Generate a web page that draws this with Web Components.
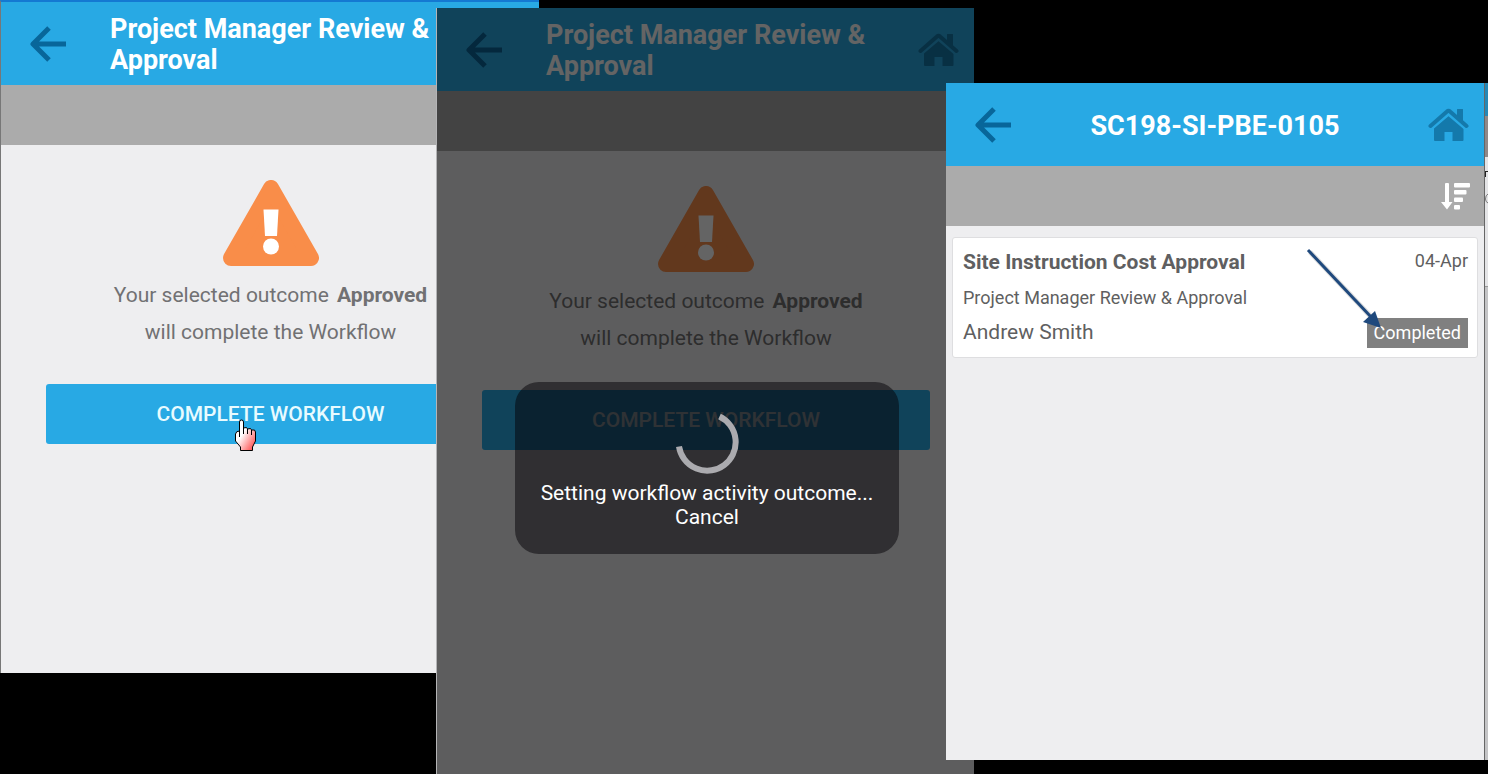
<!DOCTYPE html>
<html lang="en">
<head>
<meta charset="utf-8">
<title>Workflow approval</title>
<style>
    body {
        margin: 0;
        background: #000;
        font-family: Roboto, "Liberation Sans", sans-serif;
    }
</style>
</head>
<body>
<screen-desk>
    <app-screen class="first">
        <app-bar slot="bar">Project Manager Review &amp; Approval</app-bar>
        <tool-strip slot="tools"></tool-strip>
        <outcome-panel data-outcome="Approved"></outcome-panel>
        <hand-cursor slot="over"></hand-cursor>
    </app-screen>

    <app-screen class="second">
        <app-bar slot="bar">Project Manager Review &amp; Approval</app-bar>
        <tool-strip slot="tools"></tool-strip>
        <outcome-panel data-outcome="Approved"></outcome-panel>
        <progress-dialog slot="over">Setting workflow activity outcome...</progress-dialog>
    </app-screen>

    <app-screen class="third">
        <app-bar slot="bar" class="centered">SC198-SI-PBE-0105</app-bar>
        <tool-strip slot="tools" data-sort></tool-strip>
        <task-card>
            <span slot="title">Site Instruction Cost Approval</span>
            <span slot="date">04-Apr</span>
            <span slot="step">Project Manager Review &amp; Approval</span>
            <span slot="person">Andrew Smith</span>
            <span slot="status">Completed</span>
        </task-card>
    </app-screen>

    <screen-edge class="edge"></screen-edge>
</screen-desk>

<script>
function attach(element, html) {
    const template = document.createElement('template');
    template.innerHTML = html;
    const shadowRoot = element.attachShadow({ mode: 'open' });
    shadowRoot.appendChild(template.content.cloneNode(true));
    return shadowRoot;
}

// Overlapping screens share the columns of one grid
class ScreenDesk extends HTMLElement {
    constructor() {
        super();
        attach(this, `<style>
                        :host {
                            display: grid;
                            grid-template-columns: 437fr 102fr 407fr 28fr 510fr 4fr;
                            grid-template-rows: 1fr;
                            min-height: 100vh;
                            overflow: hidden;
                        }
                        ::slotted(*) { grid-row: 1; min-width: 0; }
                        ::slotted(.first) {
                            grid-column: 1 / 3;
                            margin-bottom: 101px;
                            border-top: 2px solid #1479d2;
                            border-left: 1px solid #777;
                        }
                        ::slotted(.second) {
                            grid-column: 2 / 5;
                            margin-top: 8px;
                            box-shadow: -1px 0 #b4b4b6;
                        }
                        ::slotted(.third) { grid-column: 4 / 6; margin: 83px 0 14px; }
                        ::slotted(.edge) { grid-column: 6; margin: 83px 0 14px; }
                      </style>
                      <slot></slot>`);
    }
}

class AppScreen extends HTMLElement {
    constructor() {
        super();
        attach(this, `<style>
                        :host {
                            display: flex;
                            flex-direction: column;
                            position: relative;
                            background: #eeeef0;
                        }
                      </style>
                      <slot name="bar"></slot>
                      <slot name="tools"></slot>
                      <slot></slot>
                      <slot name="over"></slot>`);
    }
}

class AppBar extends HTMLElement {
    constructor() {
        super();
        attach(this, `<style>
                        :host {
                            display: grid;
                            grid-template-columns: 109px 1fr 100px;
                            align-items: center;
                            height: 83px;
                            background: #28a9e4;
                            color: #fff;
                        }
                        :host(.centered) { grid-template-columns: 100px 1fr 100px; }
                        :host(.centered) h1 { text-align: center; }
                        h1 { margin: 0; padding-top: 3px; font-size: 27px; line-height: 31px; font-weight: 700; }
                        button { display: flex; padding: 0; border: 0; background: none; }
                        .back { margin-left: 29px; justify-self: start; }
                        .home { margin-right: 15px; justify-self: end; }
                      </style>
                      <button class="back" aria-label="Back">
                        <svg width="38" height="38" viewBox="0 0 38 38" fill="none" stroke="#08669a" stroke-width="5">
                            <path d="M36 19H5M19 3L3 19L19 35" stroke-linejoin="round"/>
                        </svg>
                      </button>
                      <h1><slot></slot></h1>
                      <button class="home" aria-label="Home">
                        <svg width="41" height="34" viewBox="0 0 41 34" fill="#1479ab">
                            <path d="M20.5 7.5L35.500 19.500V32Q35.500 33 34.500 33H24.500V24H16.500V33H7Q6 33 6 32V19.500Z"/>
                            <path d="M29 2Q29 1 30 1H34Q35 1 35 2V15L29 10Z"/>
                            <path d="M2 20L19 5.500Q20.500 4 22 5.500L39 20" fill="none" stroke="#28a9e4" stroke-width="6"/>
                            <path d="M29 2Q29 1 30 1H34Q35 1 35 2V15L29 10Z"/>
                            <path d="M2.500 18L19 3.500Q20.500 2 22 3.500L38.500 18" fill="none" stroke="#1479ab" stroke-width="4" stroke-linecap="round"/>
                        </svg>
                      </button>`);
    }
}

class ToolStrip extends HTMLElement {
    constructor() {
        super();
        const sort = `<button aria-label="Sort">
                        <svg width="29" height="27" viewBox="0 0 29 27" fill="#fff">
                            <path d="M4 1Q4 0 5 0H7Q8 0 8 1V19H11.500L6 26.500L0 19H4Z"/>
                            <rect x="13" y="0" width="16" height="4.500" rx="1"/>
                            <rect x="13" y="7" width="12.500" height="4.500" rx="1"/>
                            <rect x="13" y="14.500" width="9" height="4.500" rx="1"/>
                            <rect x="13" y="22" width="6" height="4.500" rx="1"/>
                        </svg>
                      </button>`;
        attach(this, `<style>
                        :host {
                            display: flex;
                            justify-content: flex-end;
                            align-items: center;
                            height: 60px;
                            padding-right: 14px;
                            background: #ababab;
                        }
                        button { display: flex; padding: 0; border: 0; background: none; }
                      </style>
                      ${this.hasAttribute('data-sort') ? sort : ''}`);
    }
}

class OutcomePanel extends HTMLElement {
    static get observedAttributes() { return ['data-outcome']; }

    constructor() {
        super();
        attach(this, `<style>
                        :host {
                            display: flex;
                            flex-direction: column;
                            align-items: center;
                            padding: 35px 44px 0 45px;
                            color: #717173;
                        }
                        p { margin: 11px 0 0; font-size: 21px; line-height: 37px; text-align: center; }
                        b { margin-left: 3px; }
                        .go {
                            align-self: stretch;
                            height: 60px;
                            margin-top: 33px;
                            padding: 0;
                            border: 0;
                            border-radius: 3px;
                            background: #28a9e4;
                            color: #e8fbff;
                            font: 500 21px/24px Roboto, sans-serif;
                        }
                      </style>
                      <svg width="96" height="86" viewBox="0 0 96 86">
                        <path d="M48 8L88 78H8Z" fill="#f98d49" stroke="#f98d49" stroke-width="16" stroke-linejoin="round"/>
                        <path d="M40.500 29.500H55.500L54 56H42Z" fill="#fff"/>
                        <circle cx="48" cy="66.500" r="8" fill="#fff"/>
                      </svg>
                      <p>Your selected outcome <b id="outcomeText"></b><br>will complete the Workflow</p>
                      <button class="go">COMPLETE WORKFLOW</button>`);
    }

    attributeChangedCallback(name, oldValue, newValue) {
        this.shadowRoot.querySelector('#outcomeText').innerText = newValue;
    }
}

class ProgressDialog extends HTMLElement {
    constructor() {
        super();
        attach(this, `<style>
                        :host {
                            position: absolute;
                            inset: 0;
                            background: rgba(2, 1, 2, .61);
                        }
                        .dialog {
                            display: flex;
                            flex-direction: column;
                            align-items: center;
                            box-sizing: border-box;
                            margin: 374px 75px 0 78px;
                            padding: 28px 0 25px;
                            border-radius: 24px;
                            background: rgba(4, 2, 6, .5);
                            color: #fff;
                            font-size: 21px;
                            line-height: 24px;
                        }
                        svg { margin-bottom: 7px; }
                        button { padding: 0; border: 0; background: none; color: inherit; font: inherit; }
                      </style>
                      <div class="dialog" role="dialog">
                        <svg width="64" height="64" viewBox="0 0 64 64" fill="none">
                            <path d="M44.500 6.500A28.500 28.500 0 1 1 4 36.500" stroke="#ababaf" stroke-width="6"/>
                        </svg>
                        <span><slot></slot></span>
                        <button>Cancel</button>
                      </div>`);
    }
}

class TaskCard extends HTMLElement {
    constructor() {
        super();
        attach(this, `<style>
                        :host {
                            display: grid;
                            grid-template-columns: 1fr auto;
                            align-items: center;
                            position: relative;
                            margin: 11px 6px 0 6px;
                            padding: 7px 9px 7px 10px;
                            border: 1px solid #dedee0;
                            border-radius: 3px;
                            background: #fff;
                            color: #5f5f61;
                            font-size: 18px;
                            line-height: 35px;
                        }
                        .title { font-size: 21px; font-weight: 700; }
                        .date { align-self: start; text-align: right; line-height: 31px; }
                        .step { grid-column: 1 / 3; }
                        .person { font-size: 21px; }
                        .status { padding: 0 7px; background: #808080; color: #fff; line-height: 30px; }
                        svg { position: absolute; top: 8px; right: 90px; }
                      </style>
                      <div class="title"><slot name="title"></slot></div>
                      <div class="date"><slot name="date"></slot></div>
                      <div class="step"><slot name="step"></slot></div>
                      <div class="person"><slot name="person"></slot></div>
                      <div class="status"><slot name="status"></slot></div>
                      <svg width="84" height="90" viewBox="0 0 84 90">
                        <path d="M7 6L71 74" stroke="#777" stroke-opacity=".25" stroke-width="5"/>
                        <path d="M5 4L69 72" stroke="#1f497d" stroke-width="3"/>
                        <path d="M78 82L60 76L72 65Z" fill="#1f497d"/>
                      </svg>`);
    }
}

class HandCursor extends HTMLElement {
    constructor() {
        super();
        attach(this, `<style>
                        :host { position: absolute; top: 417px; left: 233px; }
                        svg { display: block; }
                      </style>
                      <svg width="23" height="33" viewBox="0 0 23 33">
                        <defs>
                            <linearGradient id="skin" x1="0" y1="0" x2="1" y2="1">
                                <stop offset=".4" stop-color="#fff"/>
                                <stop offset="1" stop-color="#f33"/>
                            </linearGradient>
                        </defs>
                        <path d="M5.500 3Q5.500 1 7.500 1Q9.500 1 9.500 3V9Q13.500 7.500 13.500 10Q17.500 8.500 17.500 11Q21.500 10 21.500 13V22L18.500 28V31.500H6.500V28L1.500 22V15Q2 12 5.500 12Z" fill="url(#skin)" stroke="#000"/>
                        <path d="M5.500 11V18M9.500 9V15M13.500 10V15M17.500 11V16" fill="none" stroke="#000"/>
                      </svg>`);
    }
}

// Sliver of the screen that lies behind the last one
class ScreenEdge extends HTMLElement {
    constructor() {
        super();
        attach(this, `<style>
                        :host {
                            display: flex;
                            flex-direction: column;
                            box-sizing: border-box;
                            border-left: 1px solid #666;
                            background: #c4c4c6;
                        }
                        .bar { height: 33px; background: #2587b5; }
                        .tools { height: 41px; background: #8f8888; }
                        .card { height: 129px; border-bottom: 1px solid #999; background: #e4e4e6; }
                        svg { display: block; }
                      </style>
                      <div class="bar"></div>
                      <div class="tools"></div>
                      <div class="card">
                        <svg width="3" height="60" viewBox="0 0 3 60" fill="none" stroke="#222">
                            <path d="M0 14.500H3M.500 14V20"/>
                            <path d="M3 37Q.500 38 .500 42Q.500 45 3 46" stroke="#777"/>
                        </svg>
                      </div>`);
    }
}

customElements.define('screen-desk', ScreenDesk);
customElements.define('app-screen', AppScreen);
customElements.define('app-bar', AppBar);
customElements.define('tool-strip', ToolStrip);
customElements.define('outcome-panel', OutcomePanel);
customElements.define('progress-dialog', ProgressDialog);
customElements.define('task-card', TaskCard);
customElements.define('hand-cursor', HandCursor);
customElements.define('screen-edge', ScreenEdge);
</script>
</body>
</html>
